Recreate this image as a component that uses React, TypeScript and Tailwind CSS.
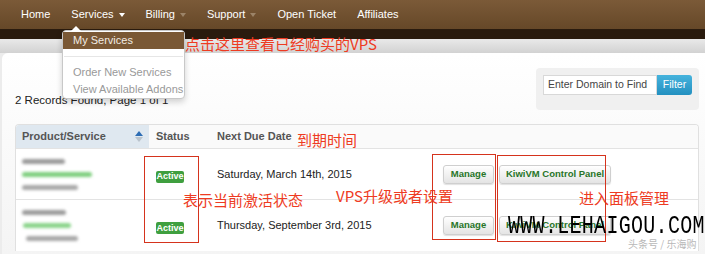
import { ReactNode } from "react";

const red = "text-[#ee3b22]";

function Caret({ light }: { light?: boolean }) {
  return (
    <span
      className={`ml-[5px] inline-block h-0 w-0 border-x-[3.5px] border-t-[4px] border-x-transparent ${
        light ? "border-t-white" : "border-t-[#9c8468]"
      }`}
    />
  );
}

function Blur({ w, c, ml = 0 }: { w: number; c: string; ml?: number }) {
  return (
    <div
      className="h-[5px] rounded-full blur-[1.5px]"
      style={{ width: w, background: c, marginLeft: ml }}
    />
  );
}

function Btn({ children, w }: { children: ReactNode; w: string }) {
  return (
    <div
      className={`${w} flex h-[19px] items-center justify-center whitespace-nowrap rounded-[3px] border border-[#cfcfcf] bg-gradient-to-b from-white to-[#e4e4e4] text-[9.5px] font-bold text-[#287528] shadow-[0_1px_1px_rgba(0,0,0,0.12)]`}
    >
      {children}
    </div>
  );
}

function Row({ date, blur, last }: { date: string; blur: ReactNode; last?: boolean }) {
  return (
    <div
      className={`grid h-[51px] grid-cols-[133px_62px_226px_1fr] items-center ${
        last ? "" : "border-b border-[#e3e3e3]"
      }`}
    >
      <div className="flex flex-col gap-[8px] pl-[6px]">{blur}</div>
      <div className="pl-[7px]">
        <span className="inline-flex h-[12px] w-[28px] items-center justify-center rounded-[2px] bg-[#3f9f3f] text-[9px] font-bold text-white">
          Active
        </span>
      </div>
      <div className="pl-[6px] text-[11px] text-[#222]">{date}</div>
      <div className="flex gap-[5px] pl-[6px]">
        <Btn w="w-[51px]">Manage</Btn>
        <Btn w="w-[112px]">KiwiVM Control Panel</Btn>
      </div>
    </div>
  );
}

export default function App() {
  const nav = [
    { t: "Home" },
    { t: "Services", caret: "light" },
    { t: "Billing", caret: "dim" },
    { t: "Support", caret: "dim" },
    { t: "Open Ticket" },
    { t: "Affiliates" },
  ];

  return (
    <div className="relative h-[254px] w-[705px] overflow-hidden bg-[#ececec] font-['Liberation_Sans',Arial,sans-serif]">
      {/* top nav */}
      <div className="flex h-[29px] items-center gap-[21px] bg-gradient-to-b from-[#7b5a38] to-[#664828] pl-[21px] text-[11px] text-white">
        {nav.map((n) => (
          <span key={n.t} className="flex items-center">
            {n.t}
            {n.caret && <Caret light={n.caret === "light"} />}
          </span>
        ))}
      </div>
      <div className="h-[10px] bg-[#2a1b0e]" />
      <div className="h-[14px] bg-gradient-to-b from-[#e9e9e9] to-[#d2d2d2]" />

      {/* content card */}
      <div className="ml-[2px] h-[201px] rounded-tl-[6px] bg-gradient-to-b from-white to-[#f4f4f4] pl-[13px] pr-[6px] pt-[15px]">
        <div className="flex items-end justify-between">
          <div className="mb-[1px] text-[11.5px] text-[#222]">2 Records Found, Page 1 of 1</div>
          <div className="flex h-[42px] w-[163px] items-start rounded-[4px] bg-[#f0f0f0] p-[7px]">
            <div className="flex h-[20px] w-[114px] items-center border border-[#d8d8d8] bg-white pl-[4px] text-[10.5px] text-[#444]">
              Enter Domain to Find
            </div>
            <div className="flex h-[20px] w-[35px] items-center justify-center rounded-r-[3px] bg-gradient-to-b from-[#45b3dd] to-[#2390c0] text-[10.5px] text-white">
              Filter
            </div>
          </div>
        </div>

        {/* table */}
        <div className="mt-[14px] overflow-hidden rounded-t-[4px] border border-b-0 border-[#e0e0e0] bg-white">
          <div className="grid h-[24px] grid-cols-[133px_62px_1fr] items-center border-b border-[#e3e3e3] bg-[#fafafa] text-[11px] font-bold text-[#555]">
            <div className="flex h-full items-center justify-between bg-[#dfe8f0] pl-[6px] pr-[6px]">
              Product/Service
              <span className="flex flex-col items-center gap-[1px]">
                <span className="h-0 w-0 border-x-[4px] border-b-[5px] border-x-transparent border-b-[#2d6db4]" />
                <span className="h-0 w-0 border-x-[4px] border-t-[5px] border-x-transparent border-t-[#b9c3cc]" />
              </span>
            </div>
            <div className="pl-[7px]">Status</div>
            <div className="pl-[6px]">Next Due Date</div>
          </div>
          <Row
            date="Saturday, March 14th, 2015"
            blur={
              <>
                <Blur w={43} c="#9a9a9a" />
                <Blur w={70} c="#7fcf7f" />
                <Blur w={56} c="#a8a8a8" />
              </>
            }
          />
          <Row
            last
            date="Thursday, September 3rd, 2015"
            blur={
              <>
                <Blur w={44} c="#9c9c9c" />
                <Blur w={48} c="#8ad48a" ml={1} />
                <Blur w={52} c="#a8a8a8" ml={4} />
              </>
            }
          />
        </div>
      </div>

      {/* services dropdown */}
      <div className="absolute left-[62px] top-[30px] h-[69px] w-[123px] rounded-[4px] border border-[#c8c8c8] bg-white text-[11px] text-[#999] shadow-[0_3px_6px_rgba(0,0,0,0.18)]">
        <span className="absolute -top-[5px] left-[8px] h-0 w-0 border-x-[5px] border-b-[5px] border-x-transparent border-b-white" />
        <div className="mt-[1px] flex h-[17px] items-center bg-[#7a5835] pl-[10px] text-[#f2ece4]">My Services</div>
        <div className="mx-[1px] mt-[7px] h-px bg-[#e6e6e6]" />
        <div className="mt-[7px] pl-[10px] leading-[17px]">Order New Services</div>
        <div className="pl-[10px] leading-[17px]">View Available Addons</div>
      </div>

      {/* annotations */}
      <div className={`absolute left-[185px] top-[35px] text-[15px] leading-[17px] ${red} font-['Noto_Sans_CJK_SC',sans-serif]`}>
        点击这里查看已经购买的VPS
      </div>
      <div className={`absolute left-[297px] top-[131px] text-[15px] leading-[18px] ${red} font-['Noto_Sans_CJK_SC',sans-serif]`}>
        到期时间
      </div>
      <div className={`absolute left-[183px] top-[191px] text-[15px] leading-[18px] ${red} font-['Noto_Sans_CJK_SC',sans-serif]`}>
        表示当前激活状态
      </div>
      <div className={`absolute left-[336px] top-[187px] text-[15px] leading-[18px] ${red} font-['Noto_Sans_CJK_SC',sans-serif]`}>
        VPS升级或者设置
      </div>
      <div className={`absolute left-[579px] top-[189px] text-[15px] leading-[18px] ${red} font-['Noto_Sans_CJK_SC',sans-serif]`}>
        进入面板管理
      </div>

      <div className="absolute left-[144px] top-[156px] h-[87px] w-[55px] border border-[#d5331d]" />
      <div className="absolute left-[432px] top-[154px] h-[86px] w-[64px] border border-[#d5331d]" />
      <div className="absolute left-[497px] top-[155px] h-[87px] w-[109px] border border-[#d5331d]" />

      <div className="absolute left-[508px] top-[213px] origin-top scale-y-[1.3] font-['Liberation_Mono',monospace] text-[20px] leading-[20px] tracking-[0.3px] text-black">
        WWW.LEHAIGOU.COM
      </div>
      <div className="absolute left-[628px] top-[237px] font-['Noto_Sans_CJK_SC',sans-serif] text-[10px] leading-[14px] text-[#b8b8b8]">
        头条号 / 乐海购
      </div>
    </div>
  );
}
